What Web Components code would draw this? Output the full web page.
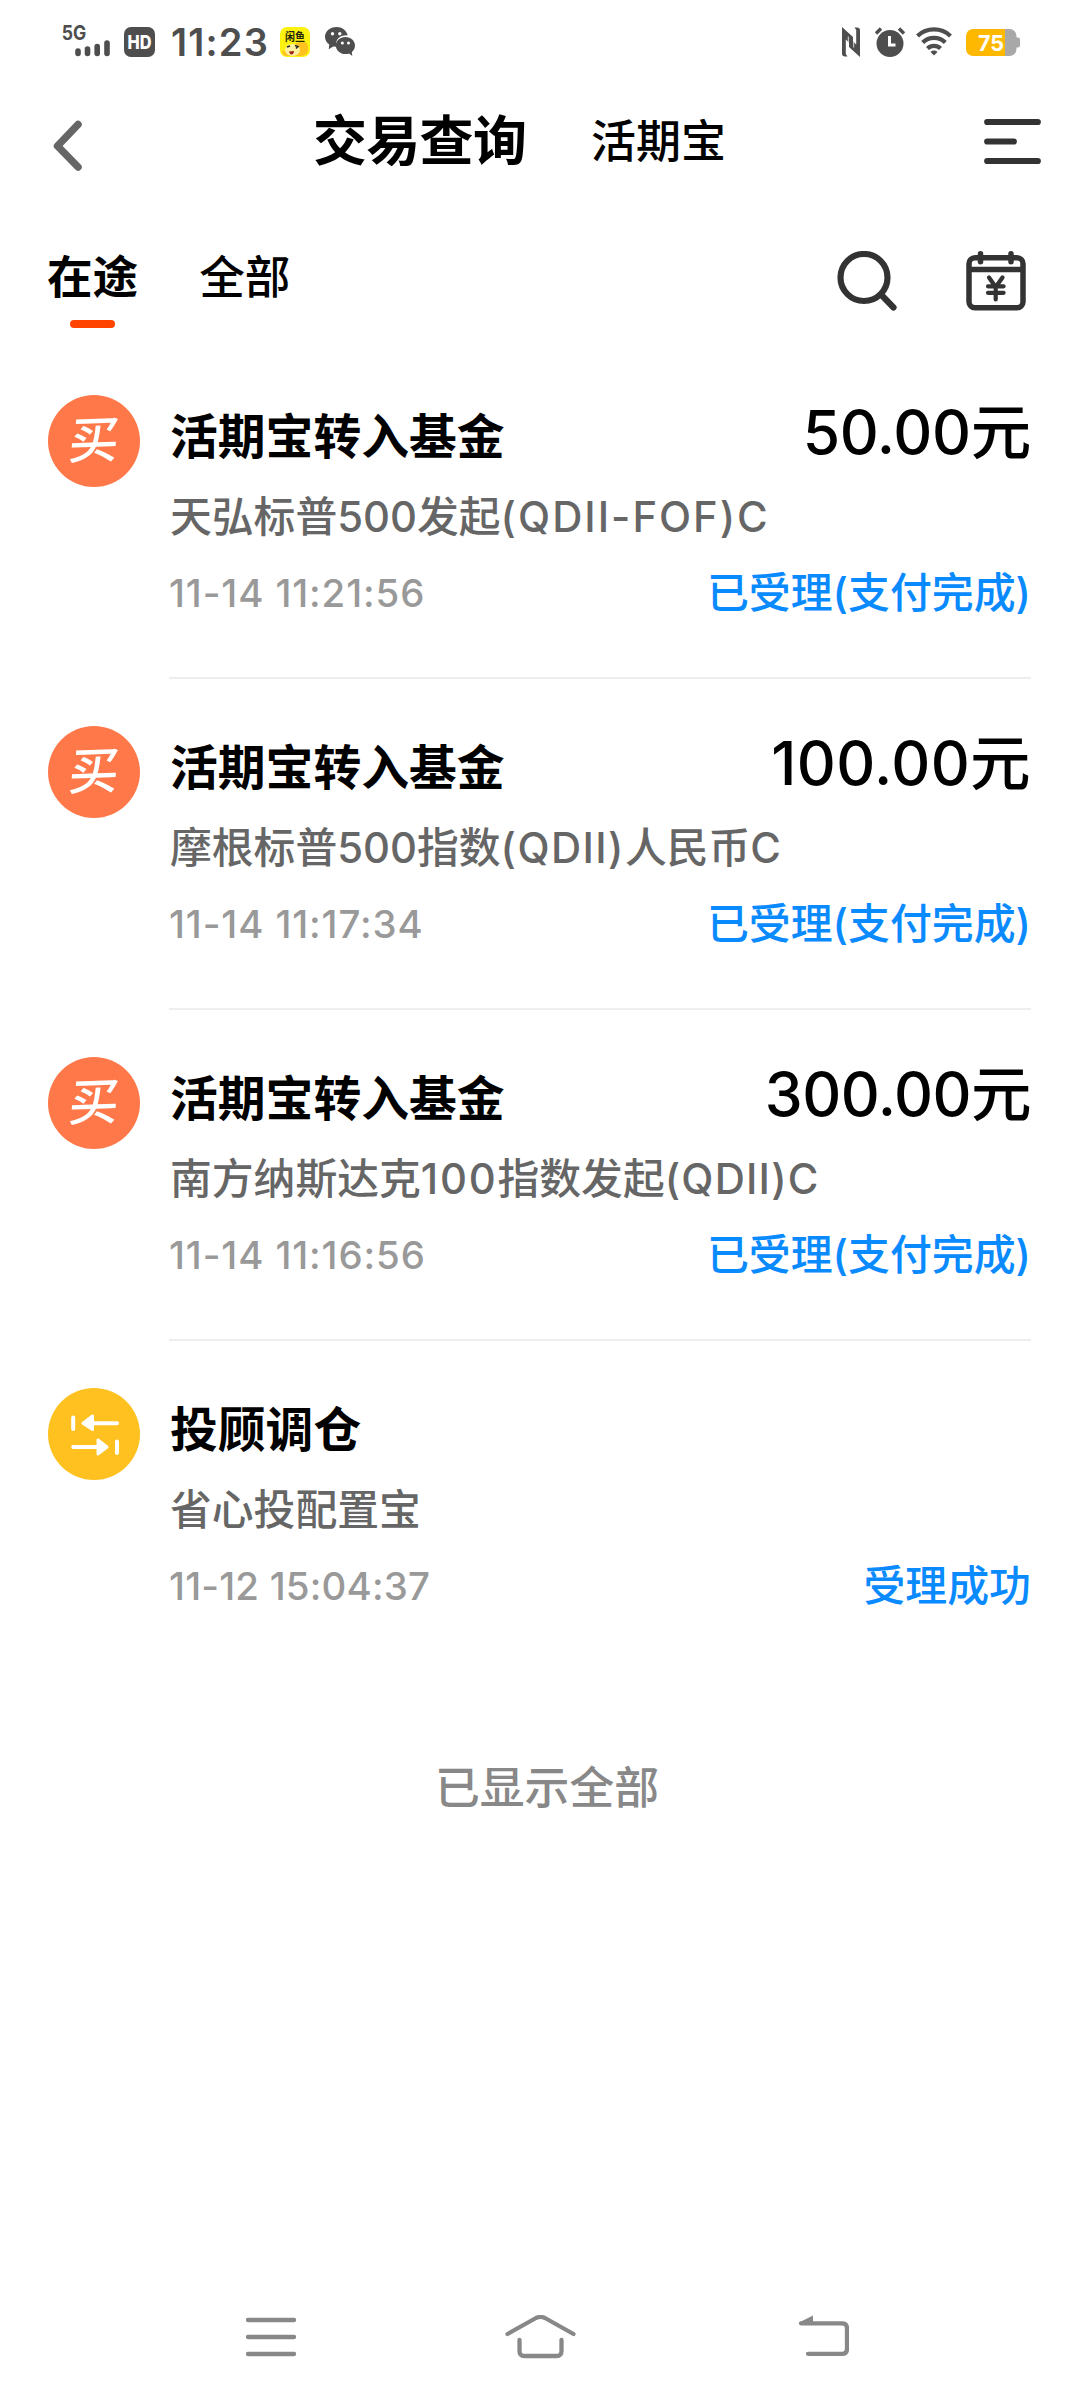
<!DOCTYPE html>
<html lang="zh-CN">
<head>
<meta charset="utf-8">
<title>交易查询</title>
<style>
html,body{margin:0;padding:0;background:#fff}
body{width:1080px;height:2400px;overflow:hidden;font-family:Inter,"Noto Sans CJK SC",sans-serif;color:#000}
</style>
</head>
<body>
<trade-app></trade-app>
<script>
const define = (name, html) => customElements.define(name, class extends HTMLElement {
  constructor() {
    super();
    const t = document.createElement('template');
    t.innerHTML = html;
    this.attachShadow({ mode: 'open' }).appendChild(t.content.cloneNode(true));
  }
});

define('status-bar', `
<style>
:host{display:flex;justify-content:space-between;box-sizing:border-box;height:84px;padding:21px 60px 0 60px;color:#4e4e4e}
div{display:flex;align-items:flex-start}
svg{display:block;flex:none;overflow:visible}
.time{font-size:38px;font-weight:600;line-height:34px;width:98px;margin:4px 10px 0 16px;white-space:nowrap;letter-spacing:1.200px}
.net,.hd,.xy,.bat{font-family:Inter,"Noto Sans CJK SC",sans-serif}
</style>
<div>
 <svg class="net" width="51" height="38" viewBox="0 0 51 38"><text x="1.800" y="18.700" font-size="20" font-weight="700" textLength="24.500" lengthAdjust="spacingAndGlyphs" fill="#4e4e4e">5G</text><g stroke="#4e4e4e" stroke-width="5.600" stroke-linecap="round"><path d="M18 30v2.500M27.500 28v4.500M37.200 25.500v7M47 22v10.500"/></g></svg>
 <svg class="hd" style="margin:6px 0 0 13px" width="31" height="30" viewBox="0 0 31 30"><rect width="31" height="30" rx="7" fill="#4e4e4e"/><text x="3.500" y="21.800" font-size="19" font-weight="800" fill="#fff" textLength="24" lengthAdjust="spacingAndGlyphs">HD</text></svg>
 <span class="time">11:23</span>
 <svg class="xy" style="margin-top:6px;margin-left:1px" width="30" height="30" viewBox="0 0 30 30"><rect width="30" height="30" rx="7" fill="#fdf10f"/><path d="M13 21c0-5 5-5 7-6 4-3 9 2 8 8 0 4-4 6-8 6H6c-3 0-4-4-4-6 3 2 5 3 7 0z" fill="#ffc21f"/><ellipse cx="12.500" cy="23" rx="7.500" ry="6" fill="#fff1a0"/><path d="M7 20l3-1M15 18.500l3 1-2 2" stroke="#222" stroke-width="1.500" fill="none"/><path d="M9 24.500l5-.5c0 4-4 5-5 .5z" fill="#a02318"/><text x="5" y="13.500" font-size="11" font-weight="700" fill="#22220a" textLength="20" lengthAdjust="spacingAndGlyphs">闲鱼</text></svg>
 <svg style="margin:6px 0 0 15px" width="30" height="30" viewBox="0 0 30 30"><path d="M11.500 0C5 0 0 4.300 0 9.800c0 3.200 1.700 5.900 4.300 7.700l-.6 4.800 4.500-2.800 3 .3C10 13 14 8 22.700 8.300 21.500 3.500 17 0 11.500 0z" fill="#4e4e4e"/><circle cx="7.500" cy="6.800" r="1.700" fill="#fff"/><circle cx="14.800" cy="6.800" r="1.700" fill="#fff"/><path d="M20.500 10c-5.500 0-9.700 3.800-9.700 8.500s4.200 8.600 9.700 8.600c1.300 0 2.500-.2 3.600-.6l3.200 2.500-.5-3.900c2-1.500 3.200-4 3.200-6.600 0-4.700-4.200-8.500-9.500-8.500z" fill="#4e4e4e"/><circle cx="17.400" cy="16" r="1.500" fill="#fff"/><circle cx="23.500" cy="16" r="1.500" fill="#fff"/></svg>
</div>
<div style="padding-top:6px">
 <svg width="18" height="30" viewBox="0 0 18 30"><path d="M0 0L11 10V19.500L3.800 12.500V27L5.500 29.500H3Q0 29.500 0 26.500zM18 30L7 20V10.500L14.200 17.500V3L12.500.5H15Q18 .5 18 3.500z" fill="#4e4e4e"/><path d="M11.700 9.500V20.500M6.300 9.500V20.500" stroke="#fff" stroke-width=".8"/></svg>
 <svg style="margin-left:15px" width="30" height="30" viewBox="0 0 30 30"><circle cx="15" cy="16.500" r="13.500" fill="#4e4e4e"/><path d="M1 6.500l5-5M29 6.500l-5-5" stroke="#4e4e4e" stroke-width="3.400"/><path d="M14.500 9v9h6" stroke="#fff" stroke-width="3" fill="none"/></svg>
 <svg style="margin-left:11px" width="36" height="30" viewBox="0 0 36 30"><g fill="none" stroke="#4e4e4e" stroke-width="4.300"><path d="M1.500 9a24 24 0 0 1 33 0"/><path d="M6.700 15.500a16 16 0 0 1 22.600 0"/><path d="M11.500 21.500a9.500 9.500 0 0 1 13 0"/></g><path d="M18 28.500l-3.500-3.500a5 5 0 0 1 7 0z" fill="#4e4e4e"/></svg>
 <svg class="bat" style="margin:2px 0 0 14px" width="54" height="27" viewBox="0 0 54 27"><path d="M39 0h4.500a7 7 0 0 1 7 7v1.500H52a2 2 0 0 1 2 2v6a2 2 0 0 1-2 2h-1.500V20a7 7 0 0 1-7 7H39z" fill="#a8a8a8"/><path d="M7 0h32v27H7a7 7 0 0 1-7-7V7a7 7 0 0 1 7-7z" fill="#ffb800"/><text x="12" y="21.500" font-size="22" font-weight="700" fill="#fff" textLength="26" lengthAdjust="spacingAndGlyphs">75</text></svg>
</div>`);

define('nav-header', `
<style>
:host{display:flex;align-items:center;box-sizing:border-box;height:116px;padding:0 39px 0 50px}
svg{display:block;flex:none}
h1{margin:0 0 0 229px;font-size:54px;font-weight:700;line-height:80px;width:216px;white-space:nowrap;letter-spacing:-.7px}
span{font-size:45px;font-weight:500;line-height:80px;margin-left:62px;flex:1;white-space:nowrap}
</style>
<svg style="margin-top:7px" width="34" height="54" viewBox="0 0 34 54"><path d="M28 5.500L7.500 27 28 48" stroke="#666" stroke-width="7.500" stroke-linecap="round" stroke-linejoin="round" fill="none"/></svg>
<h1><slot name="title"></slot></h1><span><slot name="sub"></slot></span>
<svg width="57" height="48" viewBox="0 0 57 48"><path d="M3.200 4h50.600M3.200 23.500h26.600M3.200 43h50.600" stroke="#333" stroke-width="6.200" stroke-linecap="round"/></svg>`);

define('tab-strip', `
<style>
:host{display:flex;align-items:flex-start;box-sizing:border-box;height:148px;padding:48px 53px 0 47px}
.tab{font-size:45.600px;line-height:60px;font-weight:500;white-space:nowrap;margin-right:61px}
.on{font-weight:700;display:flex;flex-direction:column;align-items:center}
.on::after{content:"";width:45px;height:8px;border-radius:4px;background:#ff4400;margin-top:12px}
.sp{flex:1}
svg{display:block;flex:none}
</style>
<div class="tab on"><slot name="active"></slot></div><div class="tab"><slot name="other"></slot></div><div class="sp"></div>
<svg style="margin-top:3px" width="60" height="60" viewBox="0 0 60 60"><circle cx="27" cy="26.500" r="23.500" fill="none" stroke="#333" stroke-width="6.200"/><path d="M44 43.500L56.500 56.500" stroke="#333" stroke-width="6.200" stroke-linecap="round"/></svg>
<svg style="margin:3px 0 0 69px" width="61" height="60" viewBox="0 0 61 60"><g fill="none" stroke="#333" stroke-width="5.500"><rect x="3" y="6.700" width="54" height="50" rx="6"/><path d="M3 18.500h54"/><path d="M14.500 2.800v8M45 2.800v8" stroke-linecap="round"/><path d="M23 26.500l6.700 9.500 6.800-9.500M29.700 36v12.500M22 35.300h15.600M22 41.800h15.600" stroke-width="4.200" stroke-linecap="round"/></g></svg>`);

define('buy-badge', `
<style>
:host{display:flex;width:92px;height:92px;border-radius:50%;background:#ff7849;color:#fff;align-items:center;justify-content:center}
span{font:500 50px/48px Inter,"Noto Sans CJK SC",sans-serif;transform:translateY(-1px) rotate(-2deg) skewX(-7deg)}
</style><span><slot></slot></span>`);

define('swap-badge', `
<style>
:host{display:flex;width:92px;height:92px;border-radius:50%;background:#ffc120;align-items:center;justify-content:center}
</style><svg width="92" height="92" viewBox="0 0 92 92"><g stroke="#fff" stroke-width="4" stroke-linecap="round" stroke-linejoin="round" fill="#fff"><path d="M25.200 29.500V41M69 53.500V65M43 35.200h26M25.200 59h26"/><path stroke-width="3" d="M35 35.200L44.500 28v13.500zM59 59L50 52v14z"/></g></svg>`);

define('trade-item', `
<style>
:host{display:flex;height:331px}
.icon{margin:47px 29px 0 48px}
.body{flex:none;width:862px;box-sizing:border-box;border-bottom:2px solid #eee;padding:57px 0 0 1px;display:flex;flex-direction:column}
:host([last]) .body{border-color:transparent}
.row{display:flex;justify-content:space-between;white-space:nowrap}
.title{font-size:47.800px;font-weight:700;line-height:64px}
.amt{font-size:60.500px;font-weight:500;line-height:64px;margin-top:-5.500px;letter-spacing:var(--amt-gap,0)}
.name{font-size:41.800px;font-weight:500;line-height:60px;margin-top:17.500px;color:#666;white-space:nowrap}
.foot{margin-top:16.500px;line-height:60px}
.time{font-size:38.400px;font-weight:500;color:#999;margin-left:-1px;letter-spacing:var(--time-gap,.9px)}
.state{font-size:41.900px;font-weight:500;color:#0a8aff}
</style>
<div class="icon"><slot name="icon"></slot></div>
<div class="body">
<div class="row"><span class="title"><slot name="title"></slot></span><span class="amt"><slot name="amount"></slot></span></div>
<div class="name"><slot name="name"></slot></div>
<div class="row foot"><span class="time"><slot name="time"></slot></span><span class="state"><slot name="state"></slot></span></div>
</div>`);

define('system-nav', `
<style>
:host{display:flex;align-items:center;box-sizing:border-box;height:126px;padding:0 231px 0 246px;justify-content:space-between}
svg{display:block}
</style>
<svg width="50" height="44" viewBox="0 0 50 44"><path d="M2 5h46M2 22h46M2 39h46" stroke="#888" stroke-width="4.300" stroke-linecap="round"/></svg>
<svg style="margin-right:13px" width="71" height="44" viewBox="0 0 71 44"><g fill="none" stroke="#888" stroke-width="4.300" stroke-linecap="round" stroke-linejoin="round"><path d="M2.500 19L31 3q4.500-2.200 9 0L68.500 19"/><path d="M14.500 25v11q0 5 5 5h32q5 0 5-5V25"/></g></svg>
<svg width="51" height="44" viewBox="0 0 51 44"><path d="M3 8.300h41q5 0 5 5v20.500q0 5-5 5H10" fill="none" stroke="#888" stroke-width="4.300" stroke-linecap="round"/><path d="M1 7.500L15 .5v8H2z" fill="#888"/></svg>`);

define('trade-app', `
<style>
:host{display:flex;flex-direction:column;width:1080px;height:2400px;background:#fff}
main{flex:1}
.end{text-align:center;color:#888;font-size:44.800px;font-weight:500;line-height:60px;margin:86px 0 0 14px}
</style>
<status-bar></status-bar>
<nav-header><span slot="title">交易查询</span><span slot="sub">活期宝</span></nav-header>
<tab-strip><span slot="active">在途</span><span slot="other">全部</span></tab-strip>
<main>
<trade-item style="--amt-gap:-.3px"><buy-badge slot="icon">买</buy-badge><span slot="title">活期宝转入基金</span><span slot="amount">50.00元</span><span slot="name">天弘标普500发起<span style="letter-spacing:2px">(QDII-FOF)C</span></span><span slot="time">11-14 11:21:56</span><span slot="state">已受理(支付完成)</span></trade-item>
<trade-item style="--amt-gap:.4px"><buy-badge slot="icon">买</buy-badge><span slot="title">活期宝转入基金</span><span slot="amount">100.00元</span><span slot="name">摩根标普500指数<span style="letter-spacing:1.400px">(QDII)</span>人民币C</span><span slot="time">11-14 11:17:34</span><span slot="state">已受理(支付完成)</span></trade-item>
<trade-item style="--amt-gap:-.5px"><buy-badge slot="icon">买</buy-badge><span slot="title">活期宝转入基金</span><span slot="amount">300.00元</span><span slot="name">南方纳斯达克<span style="letter-spacing:1.800px">100</span>指数发起<span style="letter-spacing:1.200px">(QDII)C</span></span><span slot="time">11-14 11:16:56</span><span slot="state">已受理(支付完成)</span></trade-item>
<trade-item last style="--time-gap:.2px"><swap-badge slot="icon"></swap-badge><span slot="title">投顾调仓</span><span slot="name">省心投配置宝</span><span slot="time">11-12 15:04:37</span><span slot="state">受理成功</span></trade-item>
<div class="end">已显示全部</div>
</main>
<system-nav></system-nav>`);
</script>
</body>
</html>
